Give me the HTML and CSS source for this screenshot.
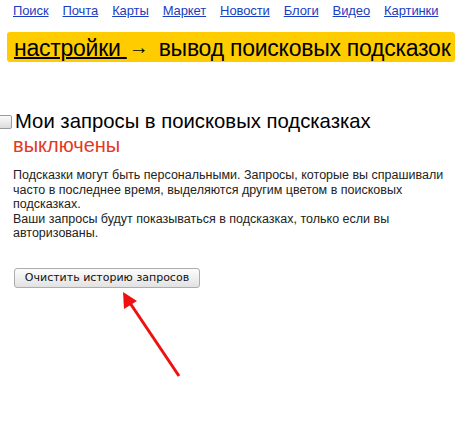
FILE: index.html
```html
<!DOCTYPE html>
<html lang="ru">

<head>
    <meta charset="UTF-8">
    <title>Настройки поисковых подсказок</title>
    <link rel="stylesheet" href="styles.css">
</head>

<body>
    <!-- Top services menu -->
    <div class="services">
        <a href="#">Поиск</a>
        <a href="#">Почта</a>
        <a href="#">Карты</a>
        <a href="#">Маркет</a>
        <a href="#">Новости</a>
        <a href="#">Блоги</a>
        <a href="#">Видео</a>
        <a href="#">Картинки</a>
    </div>

    <div class="header">
        <a href="#" class="crumb">настройки </a> <span class="sep">→</span> вывод поисковых подсказок
    </div>

    <div class="content">
        <div class="option">
            <span class="check"></span>
            <span class="option-title">Мои запросы в поисковых подсказках</span>
        </div>
        <div class="status">выключены</div>

        <p class="note">
            Подсказки могут быть персональными. Запросы, которые вы спрашивали
            часто в последнее время, выделяются другим цветом в поисковых
            подсказках.<br>
            Ваши запросы будут показываться в подсказках, только если вы
            авторизованы.
        </p>

        <button type="button" class="clear-button">Очистить историю запросов</button>
    </div>

    <!-- Red arrow drawn over the page, pointing at the button -->
    <svg class="arrow" width="457" height="432" viewBox="0 0 457 432">
        <line x1="179" y1="376" x2="130" y2="303" stroke="#ee1111" stroke-width="3" />
        <polygon points="123,292 124,309 137,301" fill="#ee1111" />
    </svg>
</body>

</html>
```

FILE: styles.css
```css
body {
    margin: 0;
    font-family: 'Liberation Sans', Arial, sans-serif;
    background-color: #fff;
    color: #000;
    overflow: hidden;
}

.services {
    display: flex;
    gap: 14px;
    padding: 3px 0 0 13px;
    height: 28px;
    box-sizing: border-box;
    font-size: 13px;
    letter-spacing: -0.1px;
}

.services a {
    color: #1a3dc1;
}

.header {
    margin: 4px 2px 0 7px;
    height: 30px;
    padding: 0 0 0 7px;
    background-color: #ffcc00;
    border-radius: 3px;
    font-size: 23px;
    line-height: 31px;
    letter-spacing: -0.25px;
    white-space: nowrap;
    color: #000;
}

.crumb {
    color: #000;
    text-decoration: underline;
    text-decoration-thickness: 2px;
}

.sep {
    font-size: 20px;
    vertical-align: 2px;
    padding: 0 4px 0 2px;
}

.content {
    padding: 47px 0 0 13px;
}

.option {
    display: flex;
    align-items: center;
    height: 24px;
}

.check {
    width: 12px;
    height: 12px;
    margin-left: -15px;
    margin-right: 3px;
    margin-top: 2px;
    border: 1px solid #9a9a9a;
    border-radius: 2px;
    background: linear-gradient(#fbfbfb, #dcdcdc);
}

.option-title {
    font-size: 20.3px;
}

.status {
    color: #e3391e;
    font-size: 20px;
    line-height: 24px;
}

.note {
    margin: 11px 0 0 0;
    font-size: 12.5px;
    line-height: 14.5px;
    color: #222;
}

.clear-button {
    margin: 27px 0 0 1px;
    width: 186px;
    height: 20px;
    padding: 0;
    font-family: 'DejaVu Sans', sans-serif;
    font-size: 11px;
    color: #111;
    background: linear-gradient(#fdfdfd, #e2e2e2);
    border: 1px solid #adadad;
    border-radius: 3px;
}

.arrow {
    position: absolute;
    top: 0;
    left: 0;
    pointer-events: none;
}
```
